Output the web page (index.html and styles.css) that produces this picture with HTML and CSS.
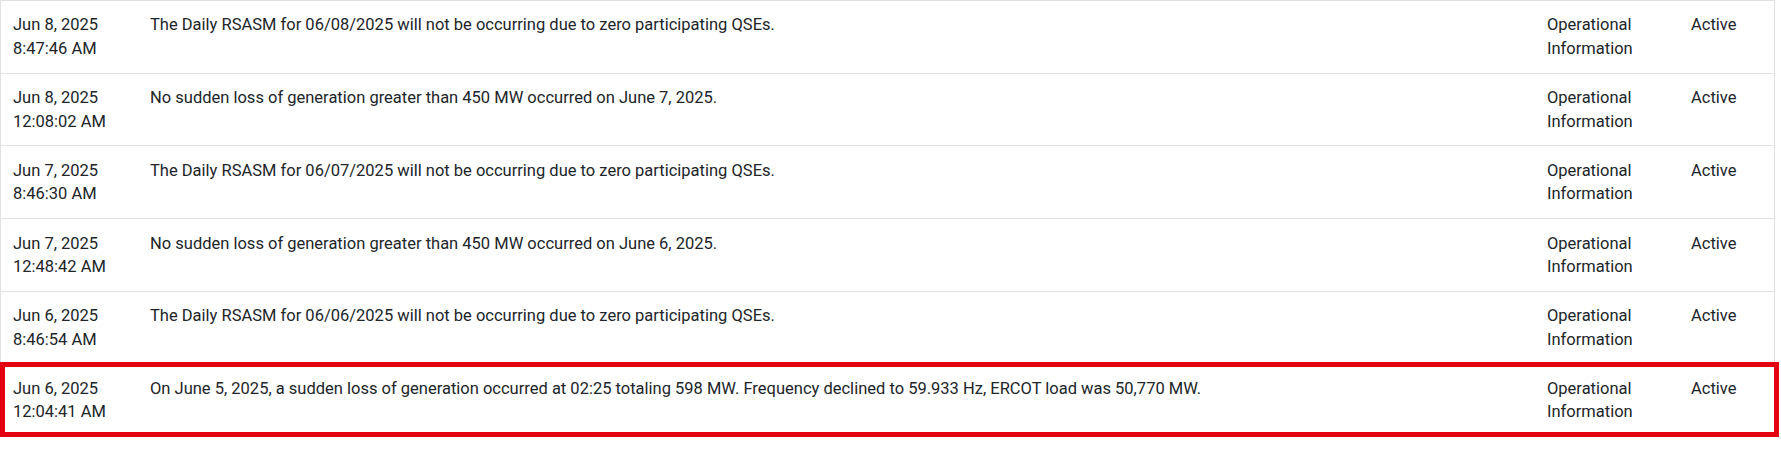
FILE: index.html
```html
<!DOCTYPE html>
<html lang="en">
<head>
<meta charset="utf-8">
<title>Notices</title>
<link rel="stylesheet" href="styles.css">
</head>
<body>
<div class="table">
  <div class="row">
    <div class="cell date">Jun 8, 2025<br>8:47:46 AM</div>
    <div class="cell msg">The Daily RSASM for 06/08/2025 will not be occurring due to zero participating QSEs.</div>
    <div class="cell cat">Operational<br>Information</div>
    <div class="cell status">Active</div>
  </div>
  <div class="row">
    <div class="cell date">Jun 8, 2025<br>12:08:02 AM</div>
    <div class="cell msg">No sudden loss of generation greater than 450 MW occurred on June 7, 2025.</div>
    <div class="cell cat">Operational<br>Information</div>
    <div class="cell status">Active</div>
  </div>
  <div class="row">
    <div class="cell date">Jun 7, 2025<br>8:46:30 AM</div>
    <div class="cell msg">The Daily RSASM for 06/07/2025 will not be occurring due to zero participating QSEs.</div>
    <div class="cell cat">Operational<br>Information</div>
    <div class="cell status">Active</div>
  </div>
  <div class="row">
    <div class="cell date">Jun 7, 2025<br>12:48:42 AM</div>
    <div class="cell msg">No sudden loss of generation greater than 450 MW occurred on June 6, 2025.</div>
    <div class="cell cat">Operational<br>Information</div>
    <div class="cell status">Active</div>
  </div>
  <div class="row">
    <div class="cell date">Jun 6, 2025<br>8:46:54 AM</div>
    <div class="cell msg">The Daily RSASM for 06/06/2025 will not be occurring due to zero participating QSEs.</div>
    <div class="cell cat">Operational<br>Information</div>
    <div class="cell status">Active</div>
  </div>
  <div class="row highlight">
    <div class="cell date">Jun 6, 2025<br>12:04:41 AM</div>
    <div class="cell msg">On June 5, 2025, a sudden loss of generation occurred at 02:25 totaling 598 MW. Frequency declined to 59.933 Hz, ERCOT load was 50,770 MW.</div>
    <div class="cell cat">Operational<br>Information</div>
    <div class="cell status">Active</div>
  </div>
</div>
</body>
</html>
```
FILE: styles.css
```css
html, body {
  margin: 0;
  padding: 0;
  background: #ffffff;
}
body {
  font-family: Roboto, "Liberation Sans", sans-serif;
  font-size: 16.5px;
  color: #212529;
}
.table {
  width: 1773px;
  border-left: 1px solid #dee2e6;
  border-right: 1px solid #dee2e6;
  border-top: 1px solid #dee2e6;
}
.row {
  display: grid;
  grid-template-columns: 137px 1397px 144px 95px;
  border-bottom: 1px solid #dee2e6;
}
.cell {
  padding: 12.45px 12px;
  line-height: 23.4px;
}
.highlight {
  position: relative;
}
.highlight::after {
  content: "";
  position: absolute;
  left: -1px;
  right: -5px;
  top: -2.5px;
  bottom: -1px;
  border: 5px solid #e3000f;
  pointer-events: none;
}
```
